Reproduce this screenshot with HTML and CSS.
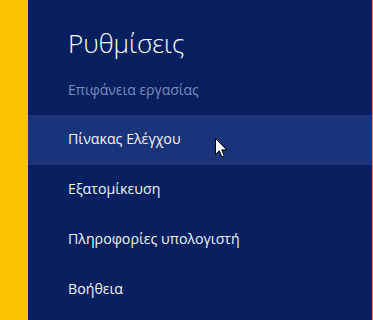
FILE: index.html
```html
<!DOCTYPE html>
<html lang="el">
<head>
    <meta charset="UTF-8">
    <meta name="viewport" content="width=device-width, initial-scale=1.0">
    <title>Ρυθμίσεις</title>
    <link rel="stylesheet" href="styles.css">
</head>
<body>
    <div class="screen">
        <div class="accent"></div>
        <div class="charm-panel">
            <h1 class="panel-title">Ρυθμίσεις</h1>
            <div class="panel-subtitle">Επιφάνεια εργασίας</div>
            <ul class="settings-list">
                <li class="settings-item hover">
                    Πίνακας Ελέγχου
                    <svg class="cursor" width="13" height="21" viewBox="0 0 13 21">
                        <path d="M0.5 0.5 L0.5 16.5 L4.3 12.8 L6.8 18.8 L9.2 17.8 L6.7 11.9 L11.8 11.9 Z" fill="#fff" stroke="#000" stroke-width="1"/>
                    </svg>
                </li>
                <li class="settings-item">Εξατομίκευση</li>
                <li class="settings-item">Πληροφορίες υπολογιστή</li>
                <li class="settings-item">Βοήθεια</li>
            </ul>
        </div>
    </div>
</body>
</html>
```

FILE: styles.css
```css
html, body {
    margin: 0;
    padding: 0;
    height: 100%;
}
body {
    font-family: "Open Sans", "Noto Sans", sans-serif;
    background: #061f5e;
    overflow: hidden;
}
.screen {
    display: flex;
    height: 320px;
}
.accent {
    width: 28px;
    background: #fbc400;
}
.charm-panel {
    flex: 1;
    background: #061f5e;
    border-right: 1px solid #f0845a;
    padding-top: 23px;
    color: #fff;
}
.panel-title {
    margin: 0 0 0 40px;
    font-size: 26px;
    font-weight: 300;
    line-height: 40px;
}
.panel-subtitle {
    margin: 17px 0 0 40px;
    font-size: 14px;
    line-height: 20px;
    color: #7d8dba;
}
.settings-list {
    list-style: none;
    margin: 15px 0 0;
    padding: 0;
}
.settings-item {
    position: relative;
    height: 50px;
    line-height: 48px;
    padding-left: 40px;
    font-size: 14.2px;
    color: #f2f4f8;
}
.settings-item.hover {
    background: #193479;
}
.cursor {
    position: absolute;
    left: 187px;
    top: 23px;
}
```
